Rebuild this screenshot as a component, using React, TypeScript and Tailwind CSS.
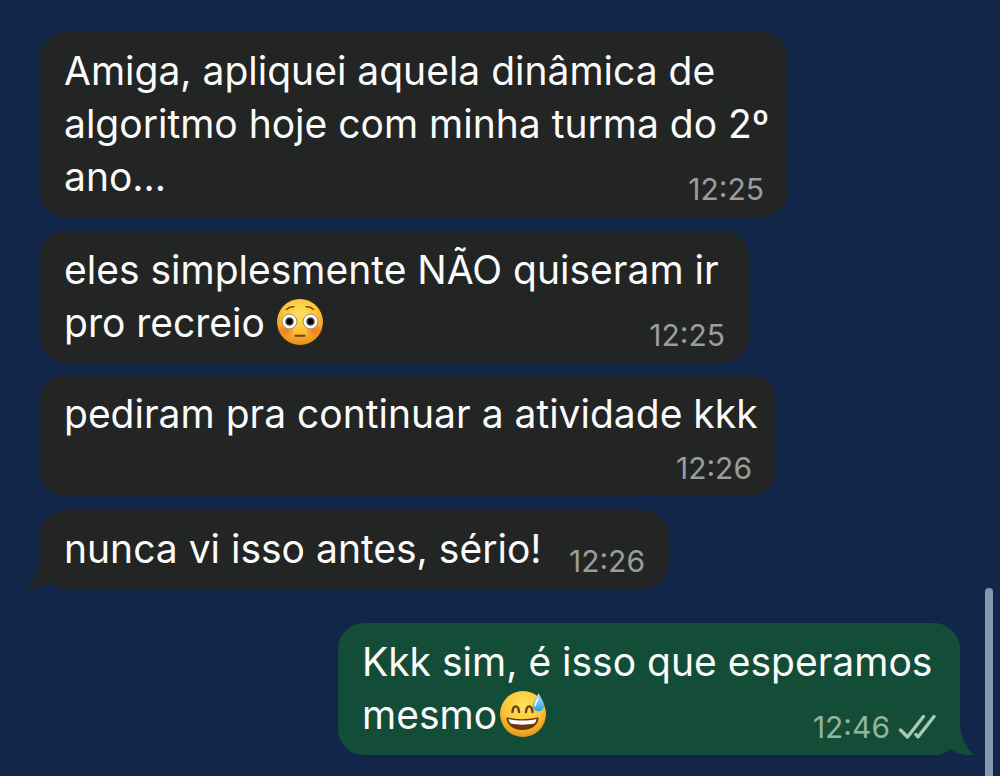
import React from 'react';
import clsx from 'clsx';

interface BubbleProps {
  time: string;
  className: string;
  outgoing?: boolean;
  tail?: boolean;
  // puts the time on its own row instead of beside the last line
  timeBelow?: boolean;
  children: React.ReactNode;
}

const FlushedFace: React.FC = () => (
  <svg viewBox="0 0 48 48" className="-mt-2 inline-block h-12 w-12 align-[-9px]" role="img" aria-label="flushed face">
    <defs>
      <radialGradient id="flushed-skin" cx="50%" cy="32%" r="68%">
        <stop offset="0" stopColor="#ffe35c" />
        <stop offset="0.55" stopColor="#fdc436" />
        <stop offset="1" stopColor="#e88a17" />
      </radialGradient>
      <radialGradient id="flushed-cheek">
        <stop offset="0" stopColor="#f4622c" stopOpacity="0.75" />
        <stop offset="1" stopColor="#f4622c" stopOpacity="0" />
      </radialGradient>
    </defs>
    <circle cx="24" cy="24" r="23" fill="url(#flushed-skin)" />
    <ellipse cx="10" cy="32" rx="9" ry="7" fill="url(#flushed-cheek)" />
    <ellipse cx="38" cy="32" rx="9" ry="7" fill="url(#flushed-cheek)" />
    <path d="M10.500 11.500c2-2.200 4.500-3 7.500-2.700M30 8.800c3-.3 5.500.5 7.500 2.700" fill="none" stroke="#7a4413" strokeWidth="1.500" strokeLinecap="round" />
    <circle cx="13.500" cy="23.500" r="7.400" fill="#fff" stroke="#9a8c6c" strokeWidth="1" />
    <circle cx="34.500" cy="23.500" r="7.400" fill="#fff" stroke="#9a8c6c" strokeWidth="1" />
    <circle cx="13.500" cy="23.500" r="4.300" fill="#5d5349" />
    <circle cx="34.500" cy="23.500" r="4.300" fill="#5d5349" />
    <circle cx="13.500" cy="23.500" r="2.900" fill="#080808" />
    <circle cx="34.500" cy="23.500" r="2.900" fill="#080808" />
    <path d="M19.500 37.700h9" stroke="#753e17" strokeWidth="2" strokeLinecap="round" />
  </svg>
);

const SweatFace: React.FC = () => (
  <svg viewBox="0 0 48 48" className="-mt-2 ml-0.5 inline-block h-12 w-12 align-[-9px]" role="img" aria-label="grinning face with sweat">
    <defs>
      <radialGradient id="sweat-skin" cx="50%" cy="32%" r="68%">
        <stop offset="0" stopColor="#ffe25b" />
        <stop offset="0.6" stopColor="#fdc638" />
        <stop offset="1" stopColor="#e69519" />
      </radialGradient>
      <linearGradient id="sweat-drop" x1="0" y1="0" x2="0" y2="1">
        <stop offset="0" stopColor="#c3e9fb" />
        <stop offset="1" stopColor="#249edb" />
      </linearGradient>
    </defs>
    <circle cx="24" cy="24" r="23" fill="url(#sweat-skin)" />
    <path d="M13.500 22c.5-7.500 6-7.500 6.500 0M27 22c.5-7.500 6-7.500 6.500 0" fill="none" stroke="#65401a" strokeWidth="2.400" strokeLinecap="round" />
    <path d="M8.500 27.500c9 2.300 20 2.300 29.500 0 1.200-.3 1.700.4 1.500 1.500C38.300 36 32 40 23.500 40S9 36 7.500 29c-.2-1.100.2-1.700 1-1.500z" fill="#6b3510" />
    <path d="M9.500 29c9 2 19 2 28 0-.3 2-1.200 3.800-2.300 4.500-7 1.500-16.500 1.500-23.400 0C10.700 32.800 9.800 31 9.500 29z" fill="#fff" />
    <path d="M39.500 3c2 4.500 5.500 8.500 5.500 12.800a5.500 5.500 0 0 1-11 0C34 11.500 37.800 7.500 39.500 3z" fill="url(#sweat-drop)" />
    <path d="M38.800 9c-1.600 2.700-2.600 4.700-2.600 7" fill="none" stroke="#eefaff" strokeWidth="1.500" strokeLinecap="round" />
  </svg>
);

const DoubleCheck: React.FC = () => (
  <svg viewBox="0 0 38 26" className="h-[26px] w-[38px]" fill="none" stroke="#a7c9b5" strokeWidth="3.400" strokeLinecap="round" strokeLinejoin="round" role="img" aria-label="delivered">
    <path d="M2.500 16L9.500 23L25.500 2.500" />
    <path d="M18 20.500L20 23L36 2.500" />
  </svg>
);

const Bubble: React.FC<BubbleProps> = ({ time, className, outgoing, tail, timeBelow, children }) => (
  <article
    className={clsx(
      'relative grid max-w-full grid-cols-1 rounded-[26px] px-6 pt-3 pb-3.5 text-[39px] leading-[53px]',
      outgoing ? 'self-end bg-[#144d37]' : 'bg-[#232524]',
      className,
    )}
  >
    {tail && (
      <svg
        viewBox="0 0 38 44"
        className={clsx('absolute bottom-0 h-11 w-[38px]', outgoing ? '-right-3.5 text-[#144d37]' : '-left-3.5 -scale-x-100 text-[#232524]')}
        aria-hidden="true"
      >
        <path d="M0 0H24V14C25 27 30 37 38 44Q24 45 14 38Q9 43 0 44z" fill="currentColor" />
      </svg>
    )}
    <p className="relative col-start-1 row-start-1 whitespace-nowrap">{children}</p>
    <div
      className={clsx(
        'relative col-start-1 flex items-center gap-2 self-end justify-self-end text-[30px] leading-7',
        timeBelow ? 'row-start-2 mt-3.5' : 'row-start-1',
        outgoing ? 'text-[#91b3a1]' : 'text-[#9b9c9c]',
      )}
    >
      <time>{time}</time>
      {outgoing && <DoubleCheck />}
    </div>
  </article>
);

const App: React.FC = () => (
  <main className="relative flex min-h-screen flex-col items-start bg-[#122649] px-10 pt-8 pb-5 font-['Inter','Liberation_Sans',sans-serif] text-[#fafafa]">
    <Bubble time="12:25" className="w-[748px]">
      Amiga, apliquei aquela dinâmica de<br />algoritmo hoje com minha turma do 2º<br />ano...
    </Bubble>
    <Bubble time="12:25" className="mt-3.5 w-[709px]">
      eles simplesmente NÃO quiseram ir<br />pro recreio <FlushedFace />
    </Bubble>
    <Bubble time="12:26" className="mt-3 w-[736px]" timeBelow>
      pediram pra continuar a atividade kkk
    </Bubble>
    <Bubble time="12:26" className="mt-3.5 w-[629px]" tail>
      nunca vi isso antes, sério!
    </Bubble>
    <Bubble time="12:46" className="mt-[34px] w-[622px]" outgoing tail>
      Kkk sim, é isso que esperamos<br />mesmo<SweatFace />
    </Bubble>
    <div className="absolute right-[7px] bottom-0 h-[188px] w-2 rounded-t-full bg-[#8698ad]" />
  </main>
);

export default App;
